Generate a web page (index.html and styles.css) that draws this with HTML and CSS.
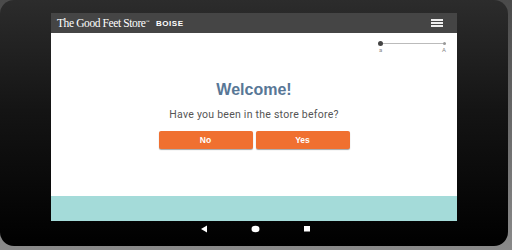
FILE: index.html
```html
<!DOCTYPE html>
<html lang="en">
<head>
    <meta charset="UTF-8">
    <meta name="viewport" content="width=device-width, initial-scale=1.0">
    <title>The Good Feet Store - Boise</title>
    <link rel="stylesheet" href="styles.css">
</head>
<body>
<div class="tablet">
    <div class="screen">
        <header class="topbar">
            <span class="brand">The Good Feet Store<sup>&trade;</sup></span>
            <span class="store">BOISE</span>
            <span class="menu" aria-label="Menu"><i></i><i></i><i></i></span>
        </header>
        <main class="content">
            <div class="text-size">
                <div class="track"><span class="knob"></span><span class="end"></span></div>
                <div class="labels"><span>a</span><span>A</span></div>
            </div>
            <h1>Welcome!</h1>
            <p>Have you been in the store before?</p>
            <div class="answers">
                <button class="btn">No</button>
                <button class="btn">Yes</button>
            </div>
        </main>
        <div class="band"></div>
    </div>
    <nav class="navbar">
        <svg width="8" height="8" viewBox="0 0 8 8"><path d="M1 4 L7 0.5 L7 7.5 Z" fill="#fff"/></svg>
        <svg width="9" height="8" viewBox="0 0 9 8"><ellipse cx="4.5" cy="4" rx="4" ry="3.3" fill="#fff"/></svg>
        <svg width="8" height="8" viewBox="0 0 8 8"><rect x="1" y="1" width="6" height="5.5" fill="#fff"/></svg>
    </nav>
</div>
</body>
</html>
```
FILE: styles.css
```css
body {
    margin: 0;
    width: 512px;
    height: 250px;
    background: linear-gradient(#4a4a4a, #8a8a8a);
    font-family: Roboto, "Liberation Sans", sans-serif;
    overflow: hidden;
}

.tablet {
    width: 508px;
    height: 246px;
    border-radius: 14px;
    background: linear-gradient(#2c2c2c, #141414 45%, #000 100%);
    box-sizing: border-box;
    padding: 13px 0 0 51px;
    display: flex;
    flex-direction: column;
}

.screen {
    width: 406px;
    height: 208px;
    display: flex;
    flex-direction: column;
    background: #fff;
}

.topbar {
    height: 20px;
    background: #454545;
    display: flex;
    align-items: center;
    padding: 0 14px 0 6px;
    color: #fff;
}

.brand {
    font-family: "Liberation Serif", serif;
    font-size: 11.5px;
    letter-spacing: -0.4px;
}

.brand sup {
    font-size: 4px;
    vertical-align: 4px;
}

.store {
    margin-left: 7px;
    font-family: "Liberation Sans", sans-serif;
    font-weight: bold;
    font-size: 8px;
    letter-spacing: 0.5px;
}

.menu {
    margin-left: auto;
    display: flex;
    flex-direction: column;
    gap: 1.5px;
}

.menu i {
    display: block;
    width: 12px;
    height: 1.5px;
    background: #eee;
}

.content {
    flex: 1;
    position: relative;
    display: flex;
    flex-direction: column;
    align-items: center;
}

.text-size {
    position: absolute;
    top: 8px;
    right: 11px;
    width: 68px;
}

.track {
    position: relative;
    height: 1px;
    margin: 2px 0 0 3px;
    background: #bbb;
}

.knob {
    position: absolute;
    left: -3px;
    top: -2px;
    width: 5px;
    height: 5px;
    border-radius: 50%;
    background: #444;
}

.end {
    position: absolute;
    right: 0;
    top: -1px;
    width: 3px;
    height: 3px;
    border-radius: 50%;
    background: #999;
}

.labels {
    display: flex;
    justify-content: space-between;
    font-size: 6px;
    color: #888;
    margin-top: 2px;
    padding-left: 1px;
}

h1 {
    margin: 48px 0 0;
    font-family: "Liberation Sans", sans-serif;
    font-size: 16px;
    font-weight: bold;
    color: #587796;
    line-height: 18px;
}

p {
    margin: 10px 0 0;
    font-size: 10.5px;
    letter-spacing: 0.25px;
    color: #555;
    line-height: 12px;
}

.answers {
    display: flex;
    gap: 3px;
    margin-top: 10px;
}

.btn {
    width: 94px;
    height: 18px;
    border: none;
    border-radius: 2px;
    background: #f07030;
    box-shadow: 0 1px 1px rgba(0, 0, 0, 0.35);
    color: #fff;
    font-family: "Liberation Sans", sans-serif;
    font-weight: bold;
    font-size: 8.5px;
    padding: 0;
}

.band {
    height: 25px;
    background: #a4dbd9;
}

.navbar {
    display: flex;
    align-items: center;
    gap: 43px;
    height: 16px;
    padding-left: 149px;
}
```
